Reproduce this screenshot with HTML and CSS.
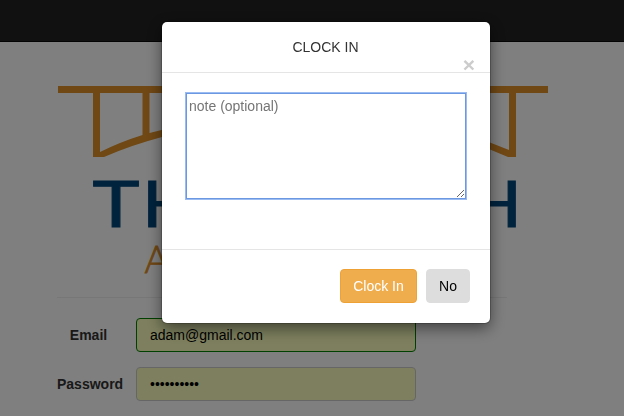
FILE: index.html
```html
<!DOCTYPE html>
<html lang="en">
<head>
<meta charset="utf-8">
<title>Clock In</title>
<link rel="stylesheet" href="styles.css">
</head>
<body>
<nav class="navbar"></nav>
<main class="page">
  <svg class="logo" viewBox="57 42 492 255" width="492" height="255">
    <path fill="#e09029" d="M58 86H548V93H516V157H508L490 149.500Q320 90 162 137Q130 145.500 104 157H93V93H58ZM100 93V152Q120 142 142.500 135V93ZM149.500 93V133Q320 87 490 142.500L509 150V93Z"/>
    <g class="logo-name">
      <text x="92.500" y="226.500" textLength="47" lengthAdjust="spacingAndGlyphs">T</text>
      <text x="142" y="226.500" textLength="56" lengthAdjust="spacingAndGlyphs">H</text>
      <text x="466" y="226.500" textLength="56" lengthAdjust="spacingAndGlyphs">H</text>
    </g>
    <text class="logo-sub" x="144.500" y="272.500">A</text>
  </svg>
  <hr class="rule">
  <form class="login">
    <label class="label" for="email">Email</label>
    <input class="field field-valid" id="email" type="text" value="adam@gmail.com">
    <label class="label" for="password">Password</label>
    <input class="field" id="password" type="password" value="0123456789">
  </form>
</main>
<div class="backdrop">
  <section class="modal" role="dialog">
    <header class="modal-header">
      <div class="title">CLOCK IN</div>
      <button class="close" type="button">×</button>
    </header>
    <div class="modal-body"><textarea class="note" placeholder="note (optional)"></textarea></div>
    <footer class="modal-footer">
      <button class="btn btn-warning" type="button">Clock In</button>
      <button class="btn btn-default" type="button">No</button>
    </footer>
  </section>
</div>
</body>
</html>
```
FILE: styles.css
```css
* { box-sizing: border-box; }
body {
  margin: 0;
  height: 416px;
  overflow: hidden;
  background: #fff;
  color: #333;
  font: 14px/20px "Liberation Sans", Arial, sans-serif;
}
.navbar { height: 42px; background: #222; border-bottom: 1px solid #080808; }
.page { padding-left: 57px; }
.logo { display: block; }
.logo-name { fill: #00467a; font: 64.5px Lato, sans-serif; stroke: #00467a; stroke-width: 1px; }
.logo-sub { fill: #e09029; font: 300 37px Lato, sans-serif; stroke: #e09029; stroke-width: .8px; }
.rule { width: 450px; height: 1px; margin: 0 0 20px; border: 0; background: #eee; }
.login { display: grid; grid-template-columns: 63px 280px; column-gap: 16px; row-gap: 15px; align-items: center; }
.label { font-weight: bold; text-align: center; white-space: nowrap; }
.field {
  width: 280px;
  height: 34px;
  padding: 6px 13px;
  border: 1px solid #ccc;
  border-radius: 4px;
  background: #faffbd;
  color: #000;
  font: inherit;
}
.field-valid { border-color: #008000; }
.backdrop { position: fixed; inset: 0; padding: 22px 0 0 162px; background: rgba(0, 0, 0, .5); }
.modal { width: 328px; height: 301px; border-radius: 5px; background: #fff; box-shadow: 0 5px 15px rgba(0, 0, 0, .5), 0 0 0 1px rgba(0, 0, 0, .2); }
.modal-header { height: 51px; padding-top: 15px; border-bottom: 1px solid #e5e5e5; text-align: center; }
.title { height: 20px; padding-right: 1px; }
.close {
  display: block;
  margin: -3px 15px 0 auto;
  padding: 0;
  border: 0;
  background: none;
  color: #ccc;
  font: bold 21px/21px "Liberation Sans", Arial, sans-serif;
}
.modal-body { height: 176px; padding: 20px 24px; }
.note {
  display: block;
  width: 280px;
  height: 106px;
  padding: 2px;
  border: 1px solid #6b98e0;
  outline: 0;
  box-shadow: 0 0 0 1px #9bbcf2;
  color: #333;
  font: inherit;
}
.note::placeholder { color: #757575; }
.modal-footer { display: flex; justify-content: flex-end; gap: 9px; padding: 19px 20px; border-top: 1px solid #e5e5e5; }
.btn { height: 34px; padding: 6px 12px; border: 1px solid; border-radius: 4px; font: inherit; }
.btn-warning { width: 77px; border-color: #eea236; background: #f0ad4e; color: #fff; }
.btn-default { width: 44px; border-color: #ddd; background: #ddd; color: #000; }
```
